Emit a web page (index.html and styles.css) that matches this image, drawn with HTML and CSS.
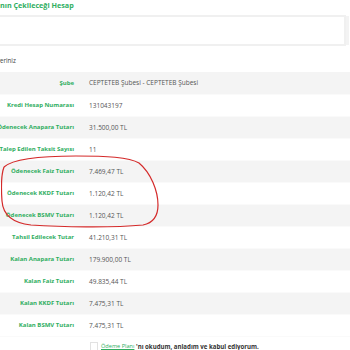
FILE: index.html
```html
<!DOCTYPE html>
<html>
<head>
    <meta charset="UTF-8">
    <title>Kredi Özeti</title>
    <link rel="stylesheet" href="styles.css">
</head>
<body>
    <div class="page">
        <h3 class="title"><span class="lead">Kredi Tutarı</span><span>nın Çekileceği Hesap</span></h3>
        <div class="account-box"></div>

        <p class="note"><span class="lead">Lütfen bilgileri kontrol edip onay v</span><span>eriniz</span></p>

        <table class="summary">
            <tbody>
                <tr><td class="label">Şube</td><td class="value">CEPTETEB Şubesi - CEPTETEB Şubesi</td></tr>
                <tr><td class="label">Kredi Hesap Numarası</td><td class="value">131043197</td></tr>
                <tr><td class="label">Ödenecek Anapara Tutarı</td><td class="value">31.500,00 TL</td></tr>
                <tr><td class="label">Talep Edilen Taksit Sayısı</td><td class="value">11</td></tr>
                <tr><td class="label">Ödenecek Faiz Tutarı</td><td class="value">7.469,47 TL</td></tr>
                <tr><td class="label">Ödenecek KKDF Tutarı</td><td class="value">1.120,42 TL</td></tr>
                <tr><td class="label">Ödenecek BSMV Tutarı</td><td class="value">1.120,42 TL</td></tr>
                <tr><td class="label">Tahsil Edilecek Tutar</td><td class="value">41.210,31 TL</td></tr>
                <tr><td class="label">Kalan Anapara Tutarı</td><td class="value">179.900,00 TL</td></tr>
                <tr><td class="label">Kalan Faiz Tutarı</td><td class="value">49.835,44 TL</td></tr>
                <tr><td class="label">Kalan KKDF Tutarı</td><td class="value">7.475,31 TL</td></tr>
                <tr><td class="label">Kalan BSMV Tutarı</td><td class="value">7.475,31 TL</td></tr>
            </tbody>
        </table>

        <label class="agree">
            <span class="check"></span>
            <a href="#" class="plan-link">Ödeme Planı</a><span> 'nı okudum, anladım ve kabul ediyorum.</span>
        </label>

        <!-- kırmızı işaret -->
        <svg class="mark" width="160" height="80" viewBox="0 0 160 80">
            <path d="M3 14 C 12 6, 40 3, 75 3 C 105 3, 128 4, 138 10 C 150 20, 157 38, 157 52 C 157 64, 152 70, 142 72 C 110 75, 60 74, 30 72 C 12 70, 2 62, 1 48 C 0 34, 0 22, 3 14"
                  fill="none" stroke="#d42a2a" stroke-width="1.2"/>
        </svg>
    </div>
</body>
</html>
```

FILE: styles.css
```css
html,
body {
    margin: 0;
    padding: 0;
}
body {
    overflow: hidden;
    background: #fff;
    font-family: 'Open Sans', sans-serif;
}

.page {
    position: relative;
    width: 350px;
}

/* metnin baş kısmı sol kenarın dışında kalır */
.title,
.note {
    display: flex;
    white-space: pre;
    margin: 0;
}
.lead {
    display: flex;
    justify-content: flex-end;
    width: 0;
}

.title {
    height: 14px;
    line-height: 11px;
    font-size: 7.2px;
    font-weight: 700;
    color: #2fae5f;
}

.account-box {
    height: 27px;
    width: 344px;
    margin: 1px 0 0 -2px;
    border: 2px solid #f0f0f0;
    box-shadow: 4px 0 0 -1px #f3f3f3;
}

.note {
    height: 26px;
    line-height: 30px;
    font-size: 6.2px;
    color: #444;
}

.summary {
    width: calc(100% + 40px);
    margin-left: -40px;
    border-collapse: collapse;
}

.summary tr {
    height: 22px;
}

.summary tr:nth-child(odd) {
    background: #f4f4f4;
}

.summary td {
    font-size: 6.5px;
    padding: 0;
    white-space: nowrap;
    border-bottom: 1px solid #fafafa;
}

.summary .label {
    width: 114px;
    padding-right: 15px;
    text-align: right;
    font-size: 6px;
    font-weight: 700;
    color: #2fae5f;
}

.summary .value {
    color: #555;
}

.agree {
    display: flex;
    align-items: center;
    margin: 5px 0 0 90px;
    font-size: 6.1px;
    font-weight: 700;
    color: #333;
    white-space: pre;
}

.check {
    width: 6px;
    height: 7px;
    margin-right: 3px;
    border: 1px solid #e2e2e2;
    background: #fff;
}

.plan-link {
    font-size: 5.6px;
    color: #2fae5f;
    font-weight: 400;
    text-decoration: underline;
}

.mark {
    position: absolute;
    left: 1px;
    top: 153px;
}
```
